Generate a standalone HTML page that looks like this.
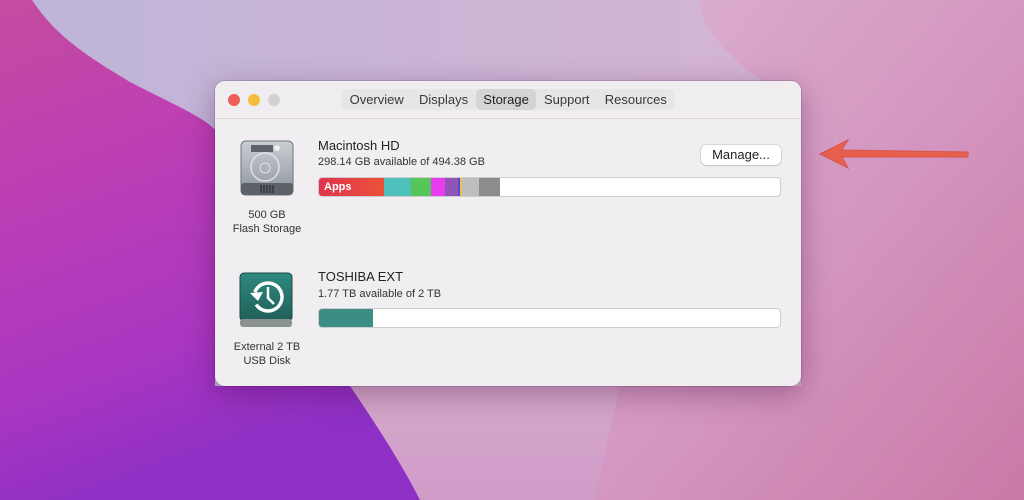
<!DOCTYPE html>
<html><head><meta charset="utf-8"><style>
*{margin:0;padding:0;box-sizing:border-box}
body{width:1024px;height:500px;overflow:hidden;position:relative;font-family:"Liberation Sans",sans-serif;}
.bg{position:absolute;left:0;top:0}
.win{position:absolute;left:215px;top:81px;width:586px;height:305px;background:#f1eef2;border-radius:10px;box-shadow:0 8px 30px rgba(60,0,60,.35),0 0 0 1px rgba(0,0,0,.12);overflow:hidden}
.tb{height:38px;border-bottom:1px solid #dcd8dc;background:#f0edf1;position:relative}
.dot{position:absolute;top:13px;width:12px;height:12px;border-radius:50%}
.tabs{position:absolute;left:127px;top:8px;height:21px;display:flex;background:#e8e5e9;border-radius:5px;font-size:13px;color:#3a3a3a}
.tabs span{padding:3px 7.6px 0;height:21px}
.tabs .sel{background:#d6d3d7;border-radius:5px;color:#222}
.t{position:absolute;color:#222;white-space:nowrap}
.bar{position:absolute;left:103px;width:463px;height:20px;border-radius:4px;background:#fff;border:1px solid #cfcbd0;overflow:hidden;display:flex}
.bar div{height:100%}
.btn{position:absolute;left:486px;top:64px;width:80px;height:20px;background:#fff;border-radius:5px;box-shadow:0 0 0 .5px rgba(0,0,0,.2),0 1px 1px rgba(0,0,0,.1);font-size:13px;text-align:center;line-height:20px;color:#222}
.lab{position:absolute;width:80px;text-align:center;font-size:11px;line-height:14px;color:#333}
</style></head><body>
<svg class="bg" width="1024" height="500" viewBox="0 0 1024 500">
<defs>
<linearGradient id="g0" x1="0" y1="0" x2="1" y2="0"><stop offset="0" stop-color="#bdb5d8"/><stop offset=".6" stop-color="#d0b4d4"/><stop offset="1" stop-color="#d9b2d2"/></linearGradient>
<linearGradient id="g1" x1="0" y1="0" x2="0.3" y2="1"><stop offset="0" stop-color="#c44c9f"/><stop offset=".35" stop-color="#bd3fb4"/><stop offset=".75" stop-color="#a936c1"/><stop offset="1" stop-color="#8e30c6"/></linearGradient>
<linearGradient id="g2" x1="0" y1="0" x2="1" y2="1"><stop offset="0" stop-color="#dcb2d0"/><stop offset=".5" stop-color="#d497c1"/><stop offset="1" stop-color="#c979a8"/></linearGradient>
<linearGradient id="g3" x1="0" y1="0" x2="0" y2="1"><stop offset="0" stop-color="#d7a8cb"/><stop offset="1" stop-color="#cf9cc9"/></linearGradient>
</defs>
<rect width="1024" height="500" fill="url(#g0)"/>
<path d="M340 386 L620 386 C610 430 600 470 595 500 L420 500Z" fill="url(#g3)"/>
<path d="M0 0 L32 0 C55 35 85 55 130 82 C175 105 205 118 215 130 L215 386 L350 386 C380 430 405 470 420 500 L0 500 Z" fill="url(#g1)"/>
<path d="M700 0 L1024 0 L1024 500 L595 500 C600 470 610 430 620 386 L801 386 L801 110 C760 80 700 40 700 0Z" fill="url(#g2)"/>
<path d="M820 154 L848 140 L842 150 L968 152 L968 157 L842 157 L848 168Z" fill="#e7604f" stroke="#d8554a" stroke-width="1"/>
</svg>
<div class="win">
<div class="tb">
<div class="dot" style="left:13px;background:#ed5e56"></div>
<div class="dot" style="left:33px;background:#f4bd3a"></div>
<div class="dot" style="left:53px;background:#d3d0d3"></div>
<div class="tabs"><span>Overview</span><span>Displays</span><span class="sel">Storage</span><span>Support</span><span>Resources</span></div>
</div>
<svg style="position:absolute;left:24px;top:58px" width="56" height="58" viewBox="0 0 56 58">
<defs><linearGradient id="hd" x1="0" y1="0" x2="0" y2="1"><stop offset="0" stop-color="#c9ced3"/><stop offset="1" stop-color="#8e959c"/></linearGradient></defs>
<rect x="2" y="2" width="52" height="54" rx="5" fill="url(#hd)" stroke="#6d737a"/>
<rect x="2" y="44" width="52" height="12" rx="3" fill="#5d6268"/>
<g stroke="#2a2d30" stroke-width="1.2"><path d="M22 46v8M25 46v8M28 46v8M31 46v8M34 46v8"/></g>
<rect x="12" y="6" width="22" height="7" fill="#5d6268"/><circle cx="38" cy="9" r="3" fill="#eee"/>
<circle cx="26" cy="28" r="14" fill="none" stroke="#e0e3e6" stroke-width="1.5"/>
<circle cx="26" cy="29" r="5" fill="none" stroke="#e0e3e6"/>
</svg>
<div class="lab" style="left:12px;top:127px">500 GB<br>Flash Storage</div>
<div class="t" style="left:103px;top:57px;font-size:13px">Macintosh HD</div>
<div class="t" style="left:103px;top:75px;font-size:11px;color:#333">298.14 GB available of 494.38 GB</div>
<div class="btn">Manage...</div>
<div class="bar" style="top:96px">
<div style="width:65px;background:linear-gradient(90deg,#e0334f,#ea5237);color:#fff;font-size:11px;font-weight:bold;padding:3px 0 0 5px">Apps</div>
<div style="width:27px;background:#4fc1bd"></div>
<div style="width:20px;background:#56c55a"></div>
<div style="width:14px;background:#ea3bef"></div>
<div style="width:13px;background:#9055b6"></div>
<div style="width:2px;background:#4550d6"></div>
<div style="width:2px;background:#f0c040"></div>
<div style="width:17px;background:#bebebe"></div>
<div style="width:21px;background:#8c8c8c"></div>
</div>
<svg style="position:absolute;left:23px;top:190px" width="56" height="58" viewBox="0 0 56 58">
<defs><linearGradient id="ex" x1="0" y1="0" x2="0" y2="1"><stop offset="0" stop-color="#2f8a80"/><stop offset="1" stop-color="#1f5f58"/></linearGradient></defs>
<rect x="2" y="2" width="52" height="48" rx="4" fill="url(#ex)" stroke="#174a44"/>
<rect x="2" y="48" width="52" height="8" rx="3" fill="#8a928f"/>
<circle cx="30" cy="26" r="14" fill="none" stroke="#fff" stroke-width="3.5" stroke-dasharray="75 20" transform="rotate(200 30 26)"/>
<path d="M12 22 L20 30 L25 21Z" fill="#fff"/>
<path d="M30 16 V27 L36 33" fill="none" stroke="#fff" stroke-width="2.5"/>
</svg>
<div class="lab" style="left:12px;top:259px">External 2 TB<br>USB Disk</div>
<div class="t" style="left:103px;top:188px;font-size:13px">TOSHIBA EXT</div>
<div class="t" style="left:103px;top:207px;font-size:11px;color:#333">1.77 TB available of 2 TB</div>
<div class="bar" style="top:227px"><div style="width:54px;background:#3a8e84"></div></div>
</div>
</body></html>
